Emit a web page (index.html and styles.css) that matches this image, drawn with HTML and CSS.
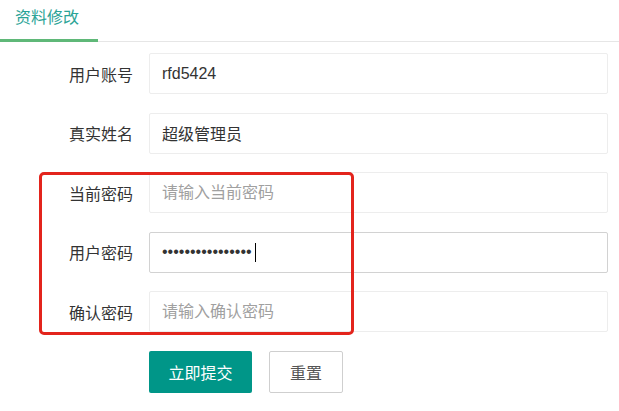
FILE: index.html
```html
<!DOCTYPE html>
<html lang="zh-CN">
<head>
<meta charset="utf-8">
<title>资料修改</title>
<link rel="stylesheet" href="styles.css">
</head>
<body>
<div class="page">
  <div class="tab-title">
    <div class="tab-item active">资料修改</div>
  </div>
  <form class="form">
    <div class="form-item">
      <label class="form-label">用户账号</label>
      <input class="form-input" type="text" value="rfd5424">
    </div>
    <div class="form-item">
      <label class="form-label">真实姓名</label>
      <input class="form-input" type="text" value="超级管理员">
    </div>
    <div class="form-item">
      <label class="form-label">当前密码</label>
      <input class="form-input" type="password" placeholder="请输入当前密码">
    </div>
    <div class="form-item">
      <label class="form-label">用户密码</label>
      <div class="input-wrap">
        <input class="form-input focused" type="password" value="abcdefghijklmnop">
        <span class="caret"></span>
      </div>
    </div>
    <div class="form-item">
      <label class="form-label">确认密码</label>
      <input class="form-input" type="password" placeholder="请输入确认密码">
    </div>
    <div class="form-buttons">
      <button type="button" class="btn btn-primary">立即提交</button>
      <button type="button" class="btn btn-reset">重置</button>
    </div>
    <div class="highlight"></div>
  </form>
</div>
</body>
</html>
```
FILE: styles.css
```css
html, body {
  margin: 0;
  padding: 0;
  background: #fff;
}
body {
  font-family: "Liberation Sans", "Noto Sans CJK SC", sans-serif;
  font-size: 16px;
  color: #333;
  width: 619px;
  height: 411px;
  overflow: hidden;
}
.tab-title {
  display: flex;
  height: 41px;
  border-bottom: 1px solid #e6e6e6;
}
.tab-item {
  width: 98px;
  box-sizing: border-box;
  padding-left: 15px;
  line-height: 36px;
  color: #2aa396;
  font-size: 16px;
  position: relative;
}
.tab-item.active::after {
  content: "";
  position: absolute;
  left: 0;
  right: 0;
  bottom: -1px;
  height: 3px;
  background: #5fb878;
}
.form {
  position: relative;
  margin-top: 11px;
}
.form-item {
  display: flex;
  align-items: center;
  margin-bottom: 18.5px;
}
.form-label {
  width: 133px;
  text-align: right;
  margin-right: 16px;
  color: #333;
  font-size: 16px;
}
.form-input, .input-wrap {
  width: 459px;
  height: 41px;
  box-sizing: border-box;
}
.form-input {
  border: 1px solid #ededed;
  border-radius: 2px;
  padding: 0 12px;
  font-family: "Liberation Sans", "Noto Sans CJK SC", sans-serif;
  font-size: 16px;
  color: #333;
  background: #fff;
  outline: none;
}
.form-input::placeholder {
  color: #a0a0a0;
}
.form-input.focused {
  border-color: #d2d2d2;
}
.input-wrap {
  position: relative;
}
.caret {
  position: absolute;
  left: 106px;
  top: 11px;
  width: 1px;
  height: 19px;
  background: #000;
}
.form-buttons {
  display: flex;
  gap: 17px;
  padding-left: 149px;
}
.btn {
  height: 42px;
  box-sizing: border-box;
  border-radius: 2px;
  font-family: "Liberation Sans", "Noto Sans CJK SC", sans-serif;
  font-size: 16px;
  cursor: pointer;
}
.btn-primary {
  width: 103px;
  background: #009688;
  color: #fff;
  border: none;
}
.btn-reset {
  width: 74px;
  background: #fff;
  color: #555;
  border: 1px solid #cfcfcf;
}
.highlight {
  position: absolute;
  left: 39px;
  top: 119px;
  width: 315px;
  height: 163px;
  box-sizing: border-box;
  border: 3px solid #e3241c;
  border-radius: 5px;
  pointer-events: none;
}
```
